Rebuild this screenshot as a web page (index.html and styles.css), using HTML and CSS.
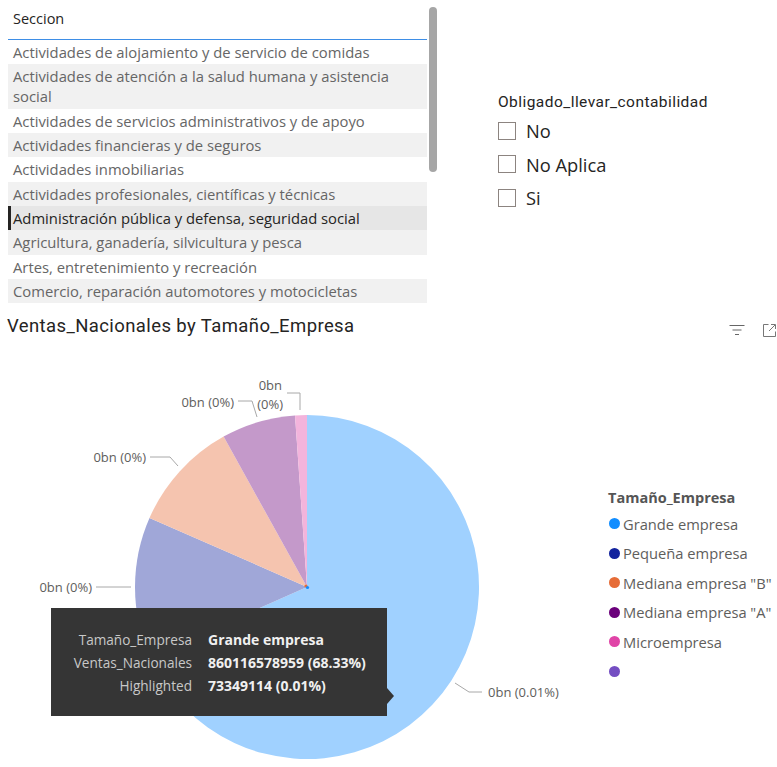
FILE: index.html
```html
<!DOCTYPE html>
<html lang="es">
<head>
<meta charset="utf-8">
<title>Ventas</title>
<link rel="stylesheet" href="styles.css">
</head>
<body>
<div class="top">
  <div class="slicer-list">
    <div class="list">
      <div class="list-head">Seccion</div>
      <div class="row">Actividades de alojamiento y de servicio de comidas</div>
      <div class="row alt">Actividades de atención a la salud humana y asistencia social</div>
      <div class="row">Actividades de servicios administrativos y de apoyo</div>
      <div class="row alt">Actividades financieras y de seguros</div>
      <div class="row">Actividades inmobiliarias</div>
      <div class="row alt">Actividades profesionales, científicas y técnicas</div>
      <div class="row hover">Administración pública y defensa, seguridad social</div>
      <div class="row alt">Agricultura, ganadería, silvicultura y pesca</div>
      <div class="row">Artes, entretenimiento y recreación</div>
      <div class="row alt">Comercio, reparación automotores y motocicletas</div>
    </div>
    <div class="scroll"><div class="thumb"></div></div>
  </div>
  <div class="check-slicer">
    <div class="check-head">Obligado_llevar_contabilidad</div>
    <div class="check-item"><span class="box"></span><span>No</span></div>
    <div class="check-item"><span class="box"></span><span>No Aplica</span></div>
    <div class="check-item"><span class="box"></span><span>Si</span></div>
  </div>
</div>

<div class="chart">
  <div class="chart-head">
    <span class="title">Ventas_Nacionales by Tamaño_Empresa</span>
    <div class="icons">
      <svg class="ico" width="16" height="14" viewBox="0 0 16 14">
        <path d="M0.5 2.5H15.5M3.5 7H12.5M6 11.5H10" stroke="#666" stroke-width="1" fill="none"/>
      </svg>
      <svg class="ico" width="15" height="15" viewBox="0 0 15 15">
        <path d="M6.5 1.5H1.5V13.5H13.5V8.5" stroke="#777" stroke-width="1" fill="none"/>
        <path d="M7 8L13 2M9 1.5H13.5V6" stroke="#777" stroke-width="1" fill="none"/>
      </svg>
    </div>
  </div>
  <div class="chart-body">
    <svg class="pie" width="580" height="422" viewBox="0 0 580 422">
      <path d="M307,242 L307,70 A172,172 0 1 1 149.9,312 Z" fill="#a0d1ff"/>
      <path d="M307,242 L149.9,312 A172,172 0 0 1 149.5,172.9 Z" fill="#a0a7d8"/>
      <path d="M307,242 L149.5,172.9 A172,172 0 0 1 223.6,91.6 Z" fill="#f5c4af"/>
      <path d="M307,242 L223.6,91.6 A172,172 0 0 1 295,70.4 Z" fill="#c499ca"/>
      <path d="M307,242 L295,70.4 A172,172 0 0 1 307,70 Z" fill="#f3b4dc"/>
      <circle cx="306" cy="241" r="1.6" fill="#e66c37"/>
      <circle cx="307.5" cy="242.5" r="1.6" fill="#118dff"/>
      <g class="leader" fill="none" stroke="#a8a8a8" stroke-width="1">
        <path d="M96,242H131"/>
        <path d="M150,112H170L178,121"/>
        <path d="M238,56H252L257,72"/>
        <path d="M287,48H300V65"/>
        <path d="M455,338L469,347H482"/>
      </g>
      <g class="lbl">
        <text x="92" y="246.5" text-anchor="end">0bn (0%)</text>
        <text x="146" y="116.5" text-anchor="end">0bn (0%)</text>
        <text x="234" y="61.5" text-anchor="end">0bn (0%)</text>
        <text x="282" y="44.5" text-anchor="end">0bn</text>
        <text x="283" y="63.5" text-anchor="end">(0%)</text>
        <text x="488" y="351.5">0bn (0.01%)</text>
      </g>
    </svg>
    <div class="legend">
      <div class="legend-title">Tamaño_Empresa</div>
      <div class="legend-item"><span class="dot c1"></span>Grande empresa</div>
      <div class="legend-item"><span class="dot c2"></span>Pequeña empresa</div>
      <div class="legend-item"><span class="dot c3"></span>Mediana empresa "B"</div>
      <div class="legend-item"><span class="dot c4"></span>Mediana empresa "A"</div>
      <div class="legend-item"><span class="dot c5"></span>Microempresa</div>
      <div class="legend-item"><span class="dot c6"></span></div>
    </div>
    <div class="tooltip">
      <div class="tt-row"><span class="tt-k">Tamaño_Empresa</span><span class="tt-v">Grande empresa</span></div>
      <div class="tt-row"><span class="tt-k">Ventas_Nacionales</span><span class="tt-v">860116578959 (68.33%)</span></div>
      <div class="tt-row"><span class="tt-k">Highlighted</span><span class="tt-v">73349114 (0.01%)</span></div>
      <span class="tt-arrow"></span>
    </div>
  </div>
</div>
</body>
</html>
```

FILE: styles.css
```css
* { box-sizing: border-box; }
html, body { margin: 0; padding: 0; background: #fff; }
body {
  width: 777px;
  height: 767px;
  overflow: hidden;
  font-family: "Open Sans", "Noto Sans", sans-serif;
  color: #605e5c;
}

.top {
  display: flex;
  height: 305px;
}

.slicer-list {
  display: flex;
  margin-left: 8px;
  width: 429px;
}

.list {
  width: 419px;
}

.list-head {
  height: 40px;
  padding: 8px 0 0 5px;
  font-size: 14.5px;
  line-height: 22px;
  color: #252423;
  border-bottom: 1px solid #3e8ee6;
}

.row {
  padding: 2px 0 2.33px 5px;
  font-size: 14.8px;
  line-height: 20px;
  color: #666;
  background: #fff;
}
.row.alt { background: #f1f1f1; }
.row.hover {
  background: #e6e6e6;
  color: #252423;
  border-left: 3px solid #252423;
  padding-left: 2px;
}

.scroll {
  margin-left: 2px;
  padding-top: 7px;
}
.thumb {
  width: 8px;
  height: 165px;
  border-radius: 4px;
  background: #a6a6a6;
}

.check-slicer {
  margin-left: 61px;
  padding-top: 91px;
}
.check-head {
  font-family: Roboto, sans-serif;
  font-size: 15.5px;
  letter-spacing: 0.45px;
  line-height: 22px;
  color: #252423;
  margin-bottom: 7px;
}
.check-item {
  display: flex;
  align-items: center;
  gap: 10px;
  height: 33.5px;
  font-size: 18.3px;
  color: #252423;
  margin-top: -6px;
  margin-bottom: 6px;
}
.box {
  width: 18px;
  height: 18px;
  border: 1px solid #8c8480;
  background: #fff;
}

.chart-head {
  display: flex;
  justify-content: space-between;
  align-items: center;
  height: 40px;
  padding: 2px 0 0 7px;
}
.title {
  font-family: Roboto, sans-serif;
  font-size: 18.5px;
  letter-spacing: 0.4px;
  color: #252423;
}
.icons {
  display: flex;
  gap: 17px;
  align-items: center;
  padding-top: 8px;
}
.ico { display: block; }

.chart-body {
  position: relative;
  display: flex;
  height: 422px;
}
.pie { display: block; flex: none; }
.lbl text {
  font-family: "Open Sans", sans-serif;
  font-size: 13px;
  fill: #605e5c;
}

.legend {
  margin-left: 28px;
  padding-top: 143px;
}
.legend-title {
  font-size: 14.5px;
  line-height: 20px;
  font-weight: 700;
  color: #555;
  margin-bottom: 1px;
}
.legend-item {
  display: flex;
  align-items: center;
  gap: 3px;
  height: 29.5px;
  font-size: 14.7px;
  color: #605e5c;
  white-space: nowrap;
}
.dot {
  width: 11px;
  height: 11px;
  border-radius: 50%;
  margin-left: 1px;
}
.c1 { background: #118dff; }
.c2 { background: #12239e; }
.c3 { background: #e66c37; }
.c4 { background: #6b007b; }
.c5 { background: #e044a7; }
.c6 { background: #744ec2; }

.tooltip {
  position: absolute;
  left: 51px;
  top: 263px;
  width: 336px;
  height: 108px;
  background: #353535;
  padding-top: 20px;
}
.tt-row {
  display: flex;
  align-items: baseline;
  font-size: 14px;
  line-height: 23px;
}
.tt-k {
  width: 141px;
  text-align: right;
  font-size: 13.6px;
  color: #c8c8c8;
  white-space: nowrap;
}
.tt-v {
  margin-left: 16px;
  color: #f0f0f0;
  font-weight: 700;
  white-space: nowrap;
}
.tt-arrow {
  position: absolute;
  right: -7px;
  top: 80px;
  width: 0;
  height: 0;
  border-top: 8px solid transparent;
  border-bottom: 8px solid transparent;
  border-left: 7px solid #353535;
}
```
